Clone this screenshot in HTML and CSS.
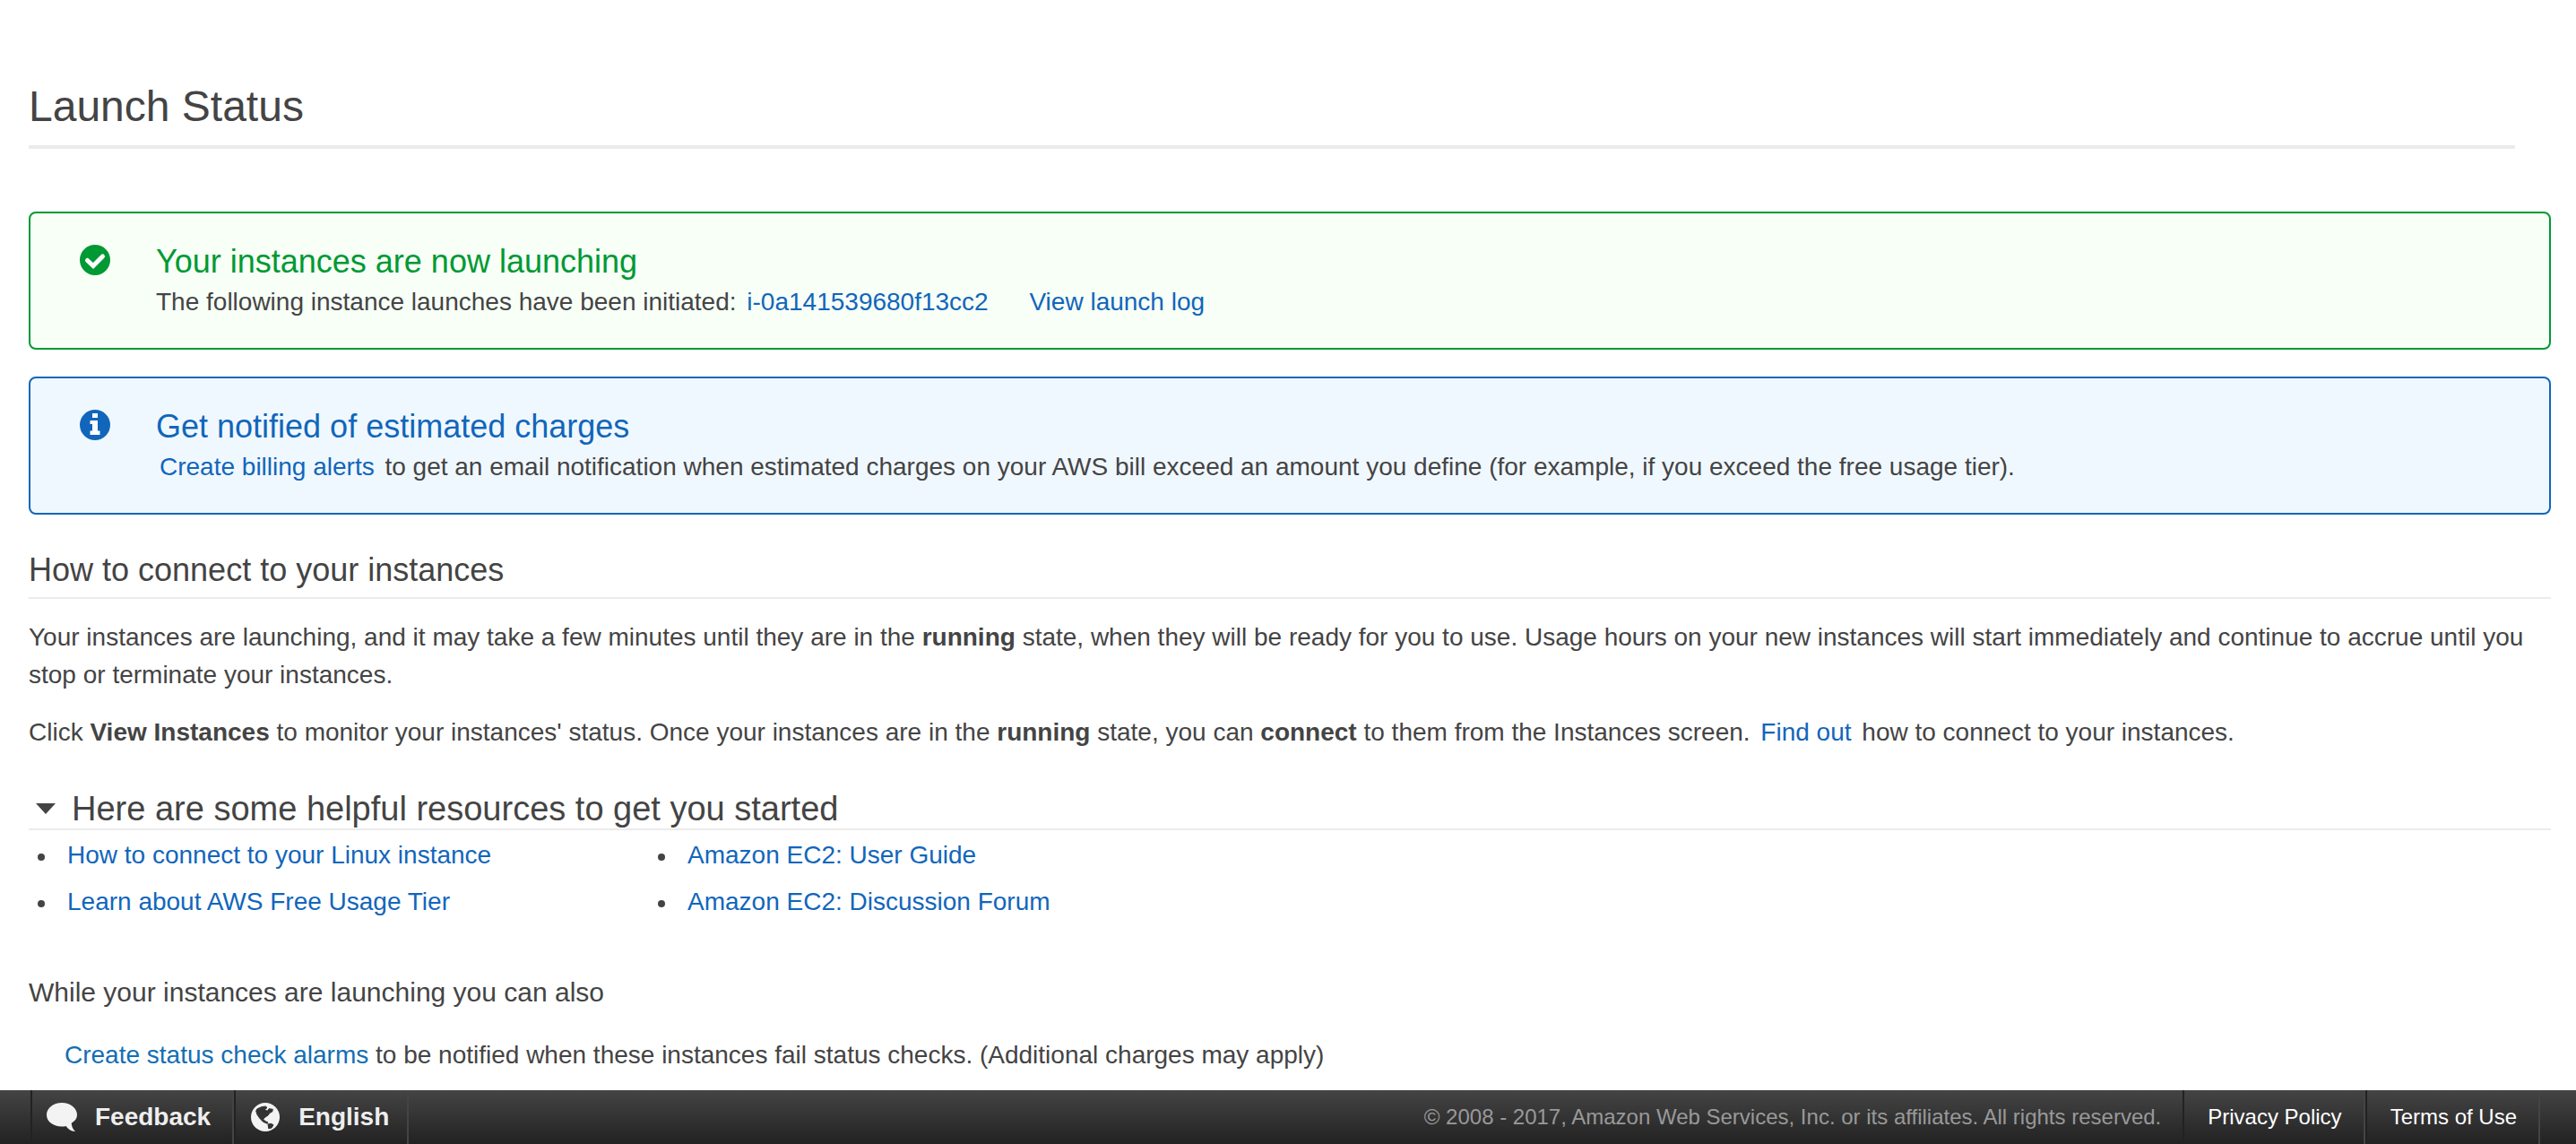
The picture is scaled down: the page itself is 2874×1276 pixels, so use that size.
FILE: index.html
```html
<!DOCTYPE html>
<html lang="en">
<head>
<meta charset="utf-8">
<title>Launch Status</title>
<link rel="stylesheet" href="styles.css">
</head>
<body>
<main class="content">
  <h1 class="page-title">Launch Status</h1>

  <section class="alert alert-success">
    <svg class="alert-icon" viewBox="0 0 34 34" aria-hidden="true">
      <circle cx="17" cy="17" r="17" fill="currentColor"/>
      <path d="M8.500 17.500l6.500 6L25.500 13" fill="none" stroke="#fff" stroke-width="5" stroke-linecap="round"/>
    </svg>
    <div class="alert-body">
      <h2 class="alert-title">Your instances are now launching</h2>
      <p class="alert-text">The following instance launches have been initiated: <a class="link" href="#">i-0a141539680f13cc2</a> <a class="link link-log" href="#">View launch log</a></p>
    </div>
  </section>

  <section class="alert alert-info">
    <svg class="alert-icon" viewBox="0 0 34 34" aria-hidden="true">
      <circle cx="17" cy="17" r="17" fill="currentColor"/>
      <path d="M14 4h6v5h-6zM11.500 12H20v11.500h2.500V28h-11v-4.500H14V16h-2.500z" fill="#fff"/>
    </svg>
    <div class="alert-body">
      <h2 class="alert-title">Get notified of estimated charges</h2>
      <p class="alert-text"><a class="link" href="#">Create billing alerts</a> to get an email notification when estimated charges on your AWS bill exceed an amount you define (for example, if you exceed the free usage tier).</p>
    </div>
  </section>

  <section>
    <h2 class="section-title">How to connect to your instances</h2>
    <p class="text">Your instances are launching, and it may take a few minutes until they are in the <b>running</b> state, when they will be ready for you to use. Usage hours on your new instances will start immediately and continue to accrue until you stop or terminate your instances.</p>
    <p class="text">Click <b>View Instances</b> to monitor your instances' status. Once your instances are in the <b>running</b> state, you can <b>connect</b> to them from the Instances screen. <a class="link" href="#">Find out</a> how to connect to your instances.</p>
  </section>

  <details class="resources" open>
    <summary class="resources-title">
      <svg class="caret" viewBox="0 0 22 12" aria-hidden="true"><path d="M0 0h22L11 12z" fill="currentColor"/></svg>
      Here are some helpful resources to get you started
    </summary>
    <ul class="resource-list">
      <li class="resource"><a href="#">How to connect to your Linux instance</a></li>
      <li class="resource"><a href="#">Amazon EC2: User Guide</a></li>
      <li class="resource"><a href="#">Learn about AWS Free Usage Tier</a></li>
      <li class="resource"><a href="#">Amazon EC2: Discussion Forum</a></li>
    </ul>
  </details>

  <section>
    <p class="also">While your instances are launching you can also</p>
    <p class="option"><a class="option-link" href="#">Create status check alarms</a> to be notified when these instances fail status checks. (Additional charges may apply)</p>
  </section>
</main>

<footer class="footer">
  <button class="footer-item footer-button" type="button">
    <svg class="footer-icon" viewBox="0 0 34 32" aria-hidden="true">
      <path d="M17 0C7.500 0 0 6 0 13.500S7.500 26.500 17 26.500c1.800 0 3.200-.2 4.500-.6 2.500 3.400 5.500 5.600 10.500 6.100-2.600-2.400-4-5.500-4.300-9.300C31.800 20.500 34 17.200 34 13.500 34 6 26.500 0 17 0z" fill="#f3f3f3"/>
    </svg>
    Feedback
  </button>
  <button class="footer-item footer-button footer-language" type="button">
    <svg class="footer-icon" viewBox="-1 0 34 32" aria-hidden="true">
      <circle cx="16" cy="16" r="16" fill="#f3f3f3"/>
      <path d="M6.700 7L11.700 4.700 16.700 4l1 2-2.700 1.300 3.300 2L20 6.700l4.300.6-.6 2.700-2.700 1.300-2 2.700-4 2.700-1.300 2 2.600 2L19 22l-.7 1.300-4.600-2-3.400-3.300L7 13.300l-1.300-4z" fill="#333" stroke="#333" stroke-width="1" stroke-linejoin="round"/>
      <path d="M19 24l3.300-.7L25 24.700 23 28l-3.300.7z" fill="#333" stroke="#333" stroke-width="1" stroke-linejoin="round"/>
    </svg>
    English
  </button>
  <p class="copyright">© 2008 - 2017, Amazon Web Services, Inc. or its affiliates. All rights reserved.</p>
  <a class="footer-item footer-link" href="#">Privacy Policy</a>
  <a class="footer-item footer-link" href="#">Terms of Use</a>
</footer>
</body>
</html>
```
FILE: styles.css
```css
* {
  box-sizing: border-box;
}

body {
  display: flex;
  flex-direction: column;
  min-height: 100vh;
  margin: 0;
  background: #fff;
  color: #444;
  font: 28px/42px "Liberation Sans", Arial, sans-serif;
}

h1,
h2,
p,
ul {
  margin: 0;
  font-weight: normal;
}

a {
  color: #1166bb;
  text-decoration: none;
}

.content {
  flex: 1;
  padding: 91px 28px 0 32px;
}

.page-title {
  margin: 0 40px 70px 0;
  padding-bottom: 15px;
  border-bottom: 4px solid #ebebeb;
  font-size: 48px;
  line-height: 56px;
}

.alert {
  display: flex;
  gap: 51px;
  margin-bottom: 30px;
  padding: 32px 55px 30px;
  border: 2px solid;
  border-radius: 8px;
}

.alert-success {
  border-color: #009933;
  background: #f7fff7;
  color: #009933;
}

.alert-info {
  border-color: #1166bb;
  background: #f0f8ff;
  color: #1166bb;
}

.alert-icon {
  flex: none;
  width: 34px;
  height: 34px;
  margin-top: 3px;
}

.alert-title {
  margin-bottom: 2px;
  font-size: 36px;
  line-height: 44px;
}

.alert-text {
  color: #444;
}

.link {
  padding: 0 4px;
}

.link-log {
  margin-left: 30px;
}

.section-title {
  margin-top: 40px;
  padding-bottom: 8px;
  border-bottom: 2px solid #ebebeb;
  font-size: 36px;
  line-height: 44px;
}

.text {
  margin-top: 22px;
}

.resources {
  margin-top: 42px;
}

.resources-title {
  display: flex;
  align-items: center;
  gap: 18px;
  padding-left: 8px;
  border-bottom: 2px solid #ebebeb;
  font-size: 38px;
  line-height: 44px;
  list-style: none;
}

.caret {
  width: 22px;
  height: 12px;
}

.resource-list {
  display: grid;
  grid-template-columns: 692px auto;
  justify-content: start;
  margin-top: 2px;
  padding-left: 10px;
  line-height: 52px;
  list-style: none;
}

.resource {
  display: flex;
  align-items: center;
  gap: 25px;
}

.resource::before {
  width: 8px;
  height: 8px;
  margin-top: 4px;
  border-radius: 50%;
  background: #444;
  content: "";
}

.also {
  margin-top: 54px;
  font-size: 30px;
}

.option {
  margin-top: 28px;
  padding-left: 40px;
}

.option-link {
  color: #146eb4;
}

.footer {
  display: flex;
  height: 60px;
  padding: 0 40px 0 34px;
  background: linear-gradient(#444, #222);
}

.footer-item {
  display: flex;
  align-items: center;
  border: 0;
  border-left: 2px solid #222;
  border-right: 2px solid #444;
  background: none;
  color: #eee;
}

.footer-button {
  gap: 20px;
  padding: 0 24px 0 16px;
  font: bold 28px/42px "Liberation Sans", Arial, sans-serif;
}

.footer-language {
  padding-right: 20px;
}

.footer-icon {
  width: 34px;
  height: 32px;
}

.copyright {
  margin-left: auto;
  padding-right: 24px;
  color: #999;
  font-size: 24px;
  line-height: 60px;
}

.footer-link {
  padding: 0 24px 0 26px;
  color: #fff;
  font-size: 24px;
}
```
